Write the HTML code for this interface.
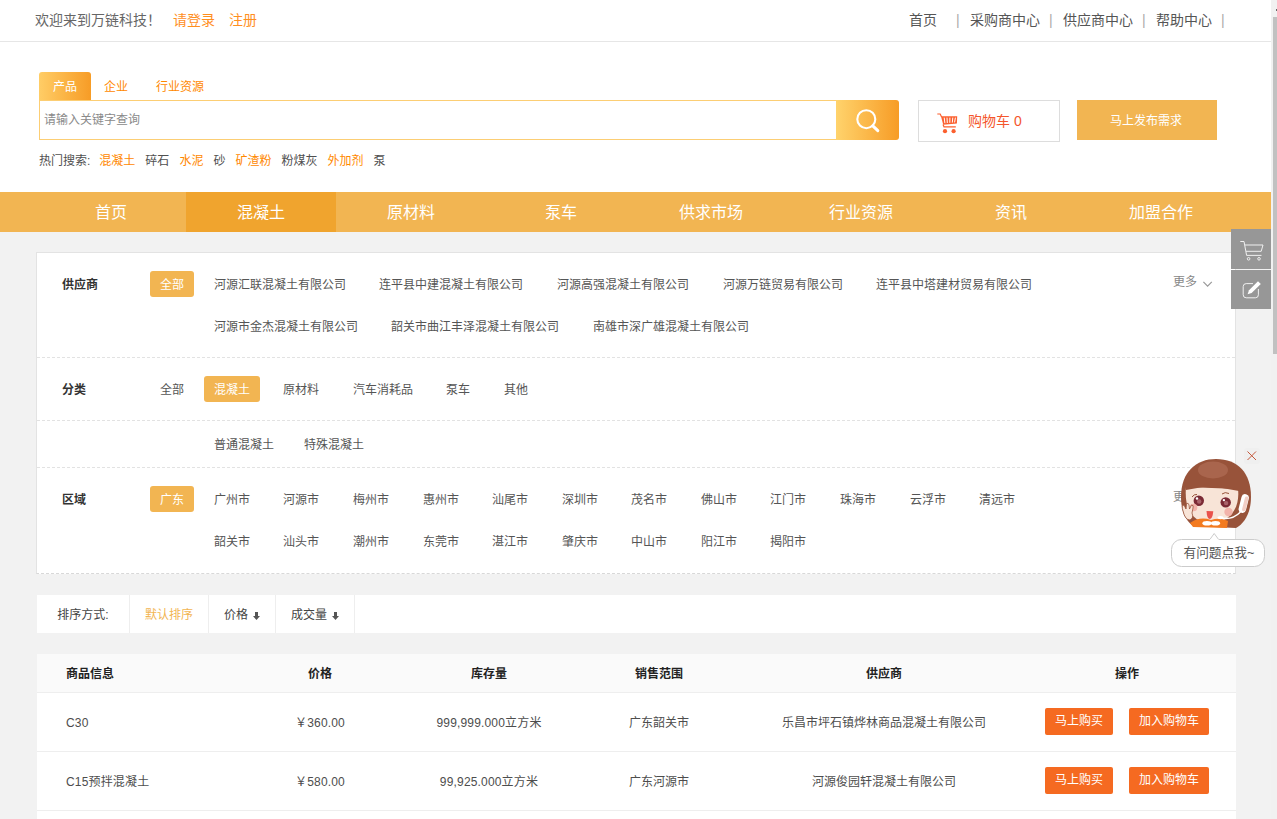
<!DOCTYPE html>
<html lang="zh-CN">
<head>
<meta charset="utf-8">
<title>万链科技</title>
<style>
*{box-sizing:border-box;margin:0;padding:0}
html,body{width:1277px;height:819px;overflow:hidden;background:#f2f2f2}
body{font-family:"Liberation Sans","Noto Sans CJK SC",sans-serif;font-size:12px;color:#555;position:relative}
a{text-decoration:none;color:inherit}
.abs{position:absolute}
#top{position:absolute;left:0;top:0;width:1271px;height:42px;background:#fff;border-bottom:1px solid #e6e6e6}
#top .l{position:absolute;left:35px;top:0;line-height:40px;font-size:14px;color:#666;white-space:nowrap}
#top .l .o{color:#ff8f1f}
#top .r{position:absolute;top:0;line-height:40px;font-size:14px;color:#555;white-space:nowrap}
#top .sep{color:#aaa}
#head{position:absolute;left:0;top:42px;width:1271px;height:150px;background:#fff}
.tab{position:absolute;top:72px;height:28px;line-height:30px;font-size:12px;color:#f80;text-align:center}
.tab.on{left:39px;width:52px;color:#fff;background:linear-gradient(90deg,#ffcd66,#f79c26);border-radius:3px 3px 0 0}
#sbox{position:absolute;left:39px;top:100px;width:798px;height:40px;border:1px solid #fcce74;background:#fff;line-height:38px;padding-left:4px;color:#8a8a8a;font-size:12px}
#sbtn{position:absolute;left:836px;top:100px;width:63px;height:40px;background:linear-gradient(90deg,#ffd36c,#f79c26);border-radius:0 3px 3px 0}
#cart{position:absolute;left:918px;top:100px;width:142px;height:42px;border:1px solid #ddd;background:#fff}
#cart span{position:absolute;left:49px;top:0;line-height:40px;font-size:14px;color:#f4562c}
#pub{position:absolute;left:1077px;top:100px;width:140px;height:40px;background:#f2b552;color:#fff;text-align:center;line-height:42px;font-size:12px;text-indent:-2px}
#hot{position:absolute;left:39px;top:153px;line-height:16px;font-size:12px;color:#505050;white-space:nowrap}
#hot span{margin-right:10px}
#hot .o{color:#f80}
#nav{position:absolute;left:0;top:192px;width:1271px;height:40px;background:#f2b552}
#nav a{position:absolute;top:0;width:150px;height:40px;line-height:42px;text-align:center;color:#fff;font-size:16px}
#nav a.on{background:#f0a42e}
#filter{position:absolute;left:36px;top:252px;width:1200px;height:322px;background:#fff;border:1px solid #e3e3e3;border-bottom:1px dashed #d8d8d8}
.fl{position:absolute;left:25px;font-size:12px;font-weight:bold;color:#333}
.fi{position:absolute;font-size:12px;color:#555;white-space:nowrap;line-height:26px;height:26px}
.fi.on{background:#f2b552;color:#fff;border-radius:3px;text-align:center;margin-top:-1px;padding-top:1px;margin-left:0}
.dash{position:absolute;left:0;width:1198px;border-top:1px dashed #e2e2e2;height:0}
#sort{position:absolute;left:37px;top:595px;width:1199px;height:38px;background:#fff}
#sort div{position:absolute;top:0;height:38px;line-height:40px;font-size:12px;color:#444;border-right:1px solid #eee;text-align:center}
#tbl{position:absolute;left:37px;top:654px;width:1199px;height:170px;background:#fff}
#tbl .th{position:absolute;left:0;top:0;width:1199px;height:39px;background:#fafafa;border-bottom:1px solid #eee}
.c{position:absolute;white-space:nowrap;font-size:12px;color:#4d4d4d;transform:translateX(-50%);line-height:20px}
.c.b{font-weight:bold;color:#222}
.c.lft{transform:none}
.c.n{letter-spacing:.17px}
.rowline{position:absolute;left:0;width:1199px;height:1px;background:#eee}
.btn{position:absolute;height:27px;line-height:27px;background:#f56a21;color:#fff;border-radius:2px;text-align:center;font-size:12px}
#sb{position:absolute;left:1271px;top:0;width:6px;height:819px;background:#f1f1f1}
#sb i{position:absolute;left:2px;top:17px;width:4px;height:337px;background:#c1c1c1}
.side{position:absolute;left:1231px;width:40px;background:#979797}
</style>
</head>
<body>
<div id="top">
  <div class="l">欢迎来到万链科技！<span class="o" style="margin-left:12px">请登录</span><span class="o" style="margin-left:14px">注册</span></div>
  <div class="r" style="left:909px">首页</div>
  <div class="r sep" style="left:956px">|</div>
  <div class="r" style="left:970px">采购商中心</div>
  <div class="r sep" style="left:1049px">|</div>
  <div class="r" style="left:1063px">供应商中心</div>
  <div class="r sep" style="left:1142px">|</div>
  <div class="r" style="left:1156px">帮助中心</div>
  <div class="r sep" style="left:1221px">|</div>
</div>
<div id="head"></div>
<div class="tab on">产品</div>
<div class="tab" style="left:104px">企业</div>
<div class="tab" style="left:156px">行业资源</div>
<div id="sbox">请输入关键字查询</div>
<div id="sbtn"><svg width="63" height="40" viewBox="0 0 63 40"><circle cx="30.3" cy="19.2" r="9" fill="none" stroke="#fff" stroke-width="2.1"/><path d="M36.8 25.8 L41.8 30.6" stroke="#fff" stroke-width="3" stroke-linecap="round"/></svg></div>
<div id="cart"><svg style="position:absolute;left:18px;top:12px" width="21" height="21" viewBox="0 0 21 21"><path d="M0.3 1 H3.2 L4.6 4" fill="none" stroke="#fb5f2e" stroke-width="1.2"/><path d="M4 3.2 H20.2 L19.9 10.6 L6.2 11.8 Z" fill="#fb5f2e"/><path d="M7.2 4.6 L7.9 10.2 M10 4.6 L10.3 10 M12.9 4.6 L12.8 9.8 M15.8 4.6 L15.3 9.6 M18.4 4.6 L17.6 9.4" stroke="#fff" stroke-width="1"/><path d="M6 11.5 L7 13.8 H18.8" fill="none" stroke="#fb5f2e" stroke-width="1.2"/><circle cx="8" cy="18.2" r="2.1" fill="#fb5f2e"/><circle cx="16.6" cy="18.2" r="2.1" fill="#fb5f2e"/></svg><span>购物车 0</span></div>
<div id="pub">马上发布需求</div>
<div id="hot">热门搜索:<span class="o" style="margin-left:9px">混凝土</span><span>碎石</span><span class="o">水泥</span><span>砂</span><span class="o">矿渣粉</span><span>粉煤灰</span><span class="o">外加剂</span><span>泵</span></div>
<div id="nav">
  <a style="left:36px">首页</a><a class="on" style="left:186px">混凝土</a><a style="left:336px">原材料</a><a style="left:486px">泵车</a><a style="left:636px">供求市场</a><a style="left:786px">行业资源</a><a style="left:936px">资讯</a><a style="left:1086px">加盟合作</a>
</div>
<div id="filter">
  <div class="fl" style="top:22px;line-height:20px">供应商</div>
  <div class="fi on" style="left:113px;top:19px;width:44px">全部</div>
  <div class="fi" style="left:177px;top:19px">河源汇联混凝土有限公司</div>
  <div class="fi" style="left:342px;top:19px">连平县中建混凝土有限公司</div>
  <div class="fi" style="left:520px;top:19px">河源高强混凝土有限公司</div>
  <div class="fi" style="left:686px;top:19px">河源万链贸易有限公司</div>
  <div class="fi" style="left:839px;top:19px">连平县中塔建材贸易有限公司</div>
  <div class="fi" style="left:1136px;top:16px;color:#888">更多</div><svg style="position:absolute;left:1165px;top:28px" width="11" height="7" viewBox="0 0 11 7"><path d="M1.4 0.9 L5.6 5.1 L9.8 0.9" fill="none" stroke="#999" stroke-width="1.2"/></svg>
  <div class="fi" style="left:177px;top:61px">河源市金杰混凝土有限公司</div>
  <div class="fi" style="left:354px;top:61px">韶关市曲江丰泽混凝土有限公司</div>
  <div class="fi" style="left:556px;top:61px">南雄市深广雄混凝土有限公司</div>
  <div class="dash" style="top:104px"></div>
  <div class="fl" style="top:127px;line-height:20px">分类</div>
  <div class="fi" style="left:123px;top:124px">全部</div>
  <div class="fi on" style="left:167px;top:124px;width:56px">混凝土</div>
  <div class="fi" style="left:246px;top:124px">原材料</div>
  <div class="fi" style="left:316px;top:124px">汽车消耗品</div>
  <div class="fi" style="left:409px;top:124px">泵车</div>
  <div class="fi" style="left:467px;top:124px">其他</div>
  <div class="dash" style="top:167px"></div>
  <div class="fi" style="left:177px;top:179px">普通混凝土</div>
  <div class="fi" style="left:267px;top:179px">特殊混凝土</div>
  <div class="dash" style="top:214px"></div>
  <div class="fl" style="top:237px;line-height:20px">区域</div>
  <div class="fi on" style="left:113px;top:234px;width:44px">广东</div>
  <div class="fi" style="left:177px;top:234px">广州市</div>
  <div class="fi" style="left:246px;top:234px">河源市</div>
  <div class="fi" style="left:316px;top:234px">梅州市</div>
  <div class="fi" style="left:386px;top:234px">惠州市</div>
  <div class="fi" style="left:455px;top:234px">汕尾市</div>
  <div class="fi" style="left:525px;top:234px">深圳市</div>
  <div class="fi" style="left:594px;top:234px">茂名市</div>
  <div class="fi" style="left:664px;top:234px">佛山市</div>
  <div class="fi" style="left:733px;top:234px">江门市</div>
  <div class="fi" style="left:803px;top:234px">珠海市</div>
  <div class="fi" style="left:873px;top:234px">云浮市</div>
  <div class="fi" style="left:942px;top:234px">清远市</div>
  <div class="fi" style="left:1136px;top:231px;color:#888">更多</div><svg style="position:absolute;left:1165px;top:243px" width="11" height="7" viewBox="0 0 11 7"><path d="M1.4 0.9 L5.6 5.1 L9.8 0.9" fill="none" stroke="#999" stroke-width="1.2"/></svg>
  <div class="fi" style="left:177px;top:276px">韶关市</div>
  <div class="fi" style="left:246px;top:276px">汕头市</div>
  <div class="fi" style="left:316px;top:276px">潮州市</div>
  <div class="fi" style="left:386px;top:276px">东莞市</div>
  <div class="fi" style="left:455px;top:276px">湛江市</div>
  <div class="fi" style="left:525px;top:276px">肇庆市</div>
  <div class="fi" style="left:594px;top:276px">中山市</div>
  <div class="fi" style="left:664px;top:276px">阳江市</div>
  <div class="fi" style="left:733px;top:276px">揭阳市</div>
</div>
<div id="sort">
  <div style="left:0;width:93px">排序方式:</div>
  <div style="left:93px;width:79px;color:#f2b552">默认排序</div>
  <div style="left:172px;width:67px">价格<svg style="display:inline-block;vertical-align:-1px;margin-left:5px" width="7" height="8" viewBox="0 0 7 8"><path d="M2 0 H5 V4 H7 L3.5 8 L0 4 H2 Z" fill="#555"/></svg></div>
  <div style="left:239px;width:79px">成交量<svg style="display:inline-block;vertical-align:-1px;margin-left:5px" width="7" height="8" viewBox="0 0 7 8"><path d="M2 0 H5 V4 H7 L3.5 8 L0 4 H2 Z" fill="#555"/></svg></div>
</div>
<div id="tbl">
  <div class="th"></div>
  <div class="c b lft" style="left:29px;top:10px">商品信息</div>
  <div class="c b" style="left:283px;top:10px">价格</div>
  <div class="c b" style="left:452px;top:10px">库存量</div>
  <div class="c b" style="left:622px;top:10px">销售范围</div>
  <div class="c b" style="left:847px;top:10px">供应商</div>
  <div class="c b" style="left:1090px;top:10px">操作</div>
  <div class="c lft n" style="left:29px;top:59px">C30</div>
  <div class="c n" style="left:283px;top:59px">￥360.00</div>
  <div class="c n" style="left:452px;top:59px">999,999.000立方米</div>
  <div class="c" style="left:622px;top:59px">广东韶关市</div>
  <div class="c" style="left:847px;top:59px">乐昌市坪石镇烨林商品混凝土有限公司</div>
  <div class="btn" style="left:1008px;top:54px;width:68px">马上购买</div>
  <div class="btn" style="left:1092px;top:54px;width:80px">加入购物车</div>
  <div class="rowline" style="top:97px"></div>
  <div class="c lft n" style="left:29px;top:118px">C15预拌混凝土</div>
  <div class="c n" style="left:283px;top:118px">￥580.00</div>
  <div class="c n" style="left:452px;top:118px">99,925.000立方米</div>
  <div class="c" style="left:622px;top:118px">广东河源市</div>
  <div class="c" style="left:847px;top:118px">河源俊园轩混凝土有限公司</div>
  <div class="btn" style="left:1008px;top:113px;width:68px">马上购买</div>
  <div class="btn" style="left:1092px;top:113px;width:80px">加入购物车</div>
  <div class="rowline" style="top:156px"></div>
</div>
<div class="side" style="top:229px;height:40px"><svg width="40" height="40" viewBox="0 0 40 40" fill="none" stroke="#f0f0f0" stroke-width="1"><path d="M9.3 12.5 H13 L15.6 26.4 H30.5"/><path d="M13.8 16 H32 L30.2 22.3 H15"/><circle cx="17.6" cy="29.8" r="1.3"/><circle cx="28" cy="29.8" r="1.3"/></svg></div>
<div class="side" style="top:270px;height:39px"><svg width="40" height="39" viewBox="0 0 40 39"><path d="M22 13.6 H15.2 Q12.2 13.6 12.2 16.6 V24.8 Q12.2 27.8 15.2 27.8 H24.4 Q27.4 27.8 27.4 24.8 V19" fill="none" stroke="#f0f0f0" stroke-width="1"/><path d="M16.6 24.2 L18 20.3 L27 11.3 L29.8 14.1 L20.6 23.1 Z" fill="#fff"/></svg></div>
<svg id="masc" style="position:absolute;left:1165px;top:440px" width="112" height="135" viewBox="1165 440 112 135">
<rect x="1244" y="448" width="16" height="16" rx="3" fill="#efefef"/>
<path d="M1247.5 451.5 L1256 460 M1256 451.5 L1247.5 460" stroke="#c4573a" stroke-width="1" fill="none"/>
<rect x="1171.5" y="539.5" width="93" height="27" rx="10" fill="#fff" stroke="#ccc"/>
<path d="M1209.5 540 L1214.2 533.5 L1219 540" fill="#fff" stroke="#ccc"/>
<rect x="1210" y="539.2" width="8.6" height="1.6" fill="#fff"/>
<path d="M1181 497 C1181 472 1196 459 1216 459 C1238 459 1251 473 1251 497 C1251 512 1245 523 1236 528 L1193 526 C1185 520 1181 510 1181 497 Z" fill="#98533a"/>
<ellipse cx="1213" cy="470" rx="15" ry="8.5" fill="#a9654d"/>
<path d="M1186 487 L1238 489 C1240 506 1232 522 1211 523 C1192 523 1184 508 1186 487 Z" fill="#f8e4d7"/>
<path d="M1186 490 L1203 487 L1204.5 483 L1206 487 L1219 488 L1221 484 L1222 488 L1239 491 L1239 480 L1185 480 Z" fill="#98533a"/>
<path d="M1190 523 Q1200 516 1211 520 Q1220 517 1228 521 L1227 528 L1193 527 Z" fill="#f37b20"/>
<ellipse cx="1207" cy="523.3" rx="4.6" ry="2.3" fill="#fff"/><ellipse cx="1215.5" cy="523.3" rx="4.6" ry="2.3" fill="#fff"/>
<circle cx="1198.8" cy="500.8" r="5.2" fill="#7b2a35"/><circle cx="1199.2" cy="501.5" r="2.2" fill="#a9636a"/><circle cx="1197" cy="498.5" r="1.2" fill="#fff"/>
<circle cx="1225.7" cy="502.4" r="5.2" fill="#7b2a35"/><circle cx="1226.1" cy="503.1" r="2.2" fill="#a9636a"/><circle cx="1223.9" cy="500.1" r="1.2" fill="#fff"/>
<path d="M1192 497 Q1194 494 1197 494.5 M1222 494 Q1225 491.5 1229 493.5" stroke="#98533a" stroke-width="1" fill="none"/>
<circle cx="1193.5" cy="507.5" r="3.8" fill="#f2b3aa"/><circle cx="1228.5" cy="512" r="4.2" fill="#f2b3aa"/>
<path d="M1206.5 511 L1213.3 511.3 Q1212.5 519 1209.8 519 Q1207 519 1206.5 511 Z" fill="#e9524b"/>
<path d="M1183 511 Q1181 505 1184 505 L1186 509 L1186.5 503.5 Q1188.5 502.5 1189 505 L1189.5 509 L1191.5 505 Q1194 505 1193 508 L1192 513 Q1194 518 1190 520 Q1185 520 1183 511 Z" fill="#f8e4d7" stroke="#98533a" stroke-width="0.8"/>
<rect x="1240" y="494" width="7.5" height="19" rx="3.7" fill="#fff" transform="rotate(14 1243.7 503.5)"/>
<rect x="1243.5" y="496" width="3.6" height="15" rx="1.8" fill="#f3cfc6" transform="rotate(14 1243.7 503.5)"/>
<path d="M1240.5 512 Q1232 520.5 1221 518" stroke="#fff" stroke-width="1.4" fill="none"/>
<ellipse cx="1220.5" cy="517.6" rx="3" ry="1.6" fill="#fff"/>
<text x="1183.5" y="556.8" font-size="12.7" fill="#555" font-family="'Liberation Sans','Noto Sans CJK SC',sans-serif">有问题点我~</text>
</svg>
<div id="sb"><i></i><b style="position:absolute;left:5px;top:9px;width:1px;height:2px;background:#666"></b></div>
</body>
</html>
